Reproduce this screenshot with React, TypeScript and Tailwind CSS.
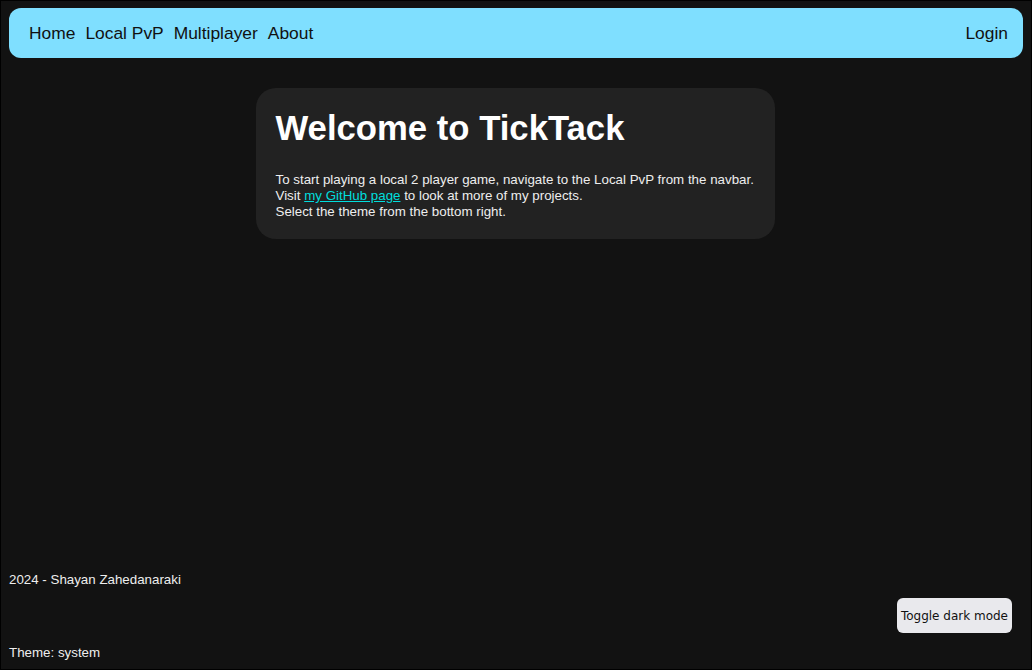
export default function App() {
  return (
    <div className="min-h-screen flex flex-col bg-[#121212] border border-black text-white font-['Liberation_Sans',Arial,sans-serif]">
      {/* Navbar */}
      <nav className="mx-2 mt-[7px] h-[50px] rounded-xl bg-[#7fdfff] flex items-center justify-between pl-5 pr-[15px] pt-px text-[17.4px] text-[#111]">
        <div className="flex items-center gap-[10px]">
          <a>Home</a>
          <a>Local PvP</a>
          <a>Multiplayer</a>
          <a>About</a>
        </div>
        <a>Login</a>
      </nav>

      {/* Main */}
      <main className="flex-1 flex justify-center pt-[30px] pr-[2px]">
        <div className="w-[519px] h-fit rounded-[20px] bg-[#222222] px-5 pt-[14px] pb-[19px]">
          <h1 className="text-[34.7px] font-bold leading-[52px] mb-[18px]">
            Welcome to TickTack
          </h1>
          <p className="text-[13.33px] leading-4 text-[#eeeeee]">
            To start playing a local 2 player game, navigate to the Local PvP from the navbar.
            <br />
            Visit{" "}
            <a className="text-[#00dddd] underline">my GitHub page</a>{" "}
            to look at more of my projects.
            <br />
            Select the theme from the bottom right.
          </p>
        </div>
      </main>

      {/* Footer */}
      <footer className="px-2 pb-[8px] text-[13.33px] leading-4 text-[#eeeeee]">
        <p>2024 - Shayan Zahedanaraki</p>
        <div className="flex justify-end mt-[10px] mr-[11px]">
          <button className="h-[35px] px-1 rounded-md bg-[#e9e9ed] text-[#111] font-['DejaVu_Sans',sans-serif] text-[12px]">
            Toggle dark mode
          </button>
        </div>
        <p className="mt-[12px]">Theme: system</p>
      </footer>
    </div>
  );
}
